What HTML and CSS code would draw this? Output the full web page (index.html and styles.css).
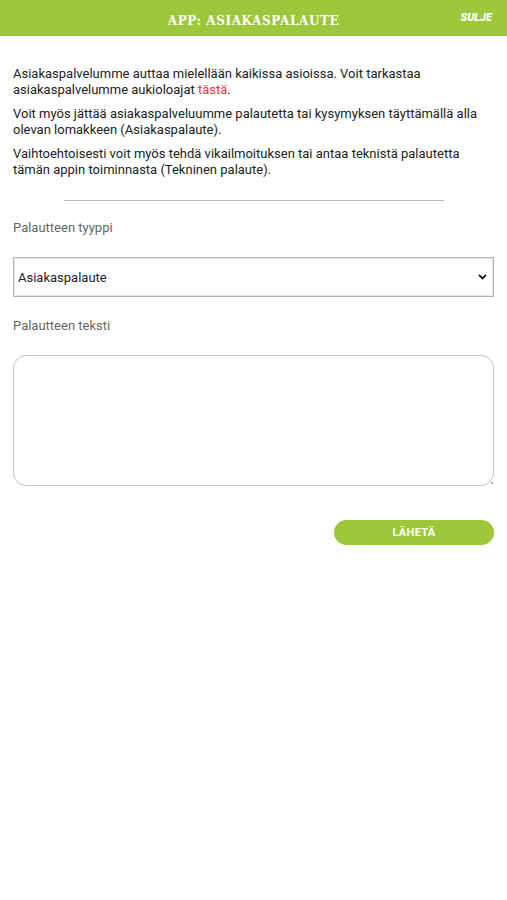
FILE: index.html
```html
<!DOCTYPE html>
<html lang="fi">
<head>
<meta charset="utf-8">
<title>APP: ASIAKASPALAUTE</title>
<link rel="stylesheet" href="styles.css">
</head>
<body>
<header class="topbar">
  <h1 class="title">APP: ASIAKASPALAUTE</h1>
  <a class="close" href="#">SULJE</a>
</header>
<main class="content">
  <p>Asiakaspalvelumme auttaa mielellään kaikissa asioissa. Voit tarkastaa asiakaspalvelumme aukioloajat <a class="link" href="#">tästä</a>.</p>
  <p>Voit myös jättää asiakaspalveluumme palautetta tai kysymyksen täyttämällä alla olevan lomakkeen (Asiakaspalaute).</p>
  <p>Vaihtoehtoisesti voit myös tehdä vikailmoituksen tai antaa teknistä palautetta tämän appin toiminnasta (Tekninen palaute).</p>
  <hr class="divider">
  <form class="form">
    <label class="label" for="text">Palautteen tyyppi</label>
    <div class="select">
      <span>Asiakaspalaute</span>
      <svg class="chev" width="9" height="6" viewBox="0 0 9 6"><path d="M1 1 L4.5 4.5 L8 1" fill="none" stroke="#222" stroke-width="1.8"/></svg>
    </div>
    <label class="label" for="text">Palautteen teksti</label>
    <div class="textwrap">
      <textarea id="text" class="textarea"></textarea>
      <span class="grip"></span>
    </div>
    <div class="actions">
      <button type="button" class="send">LÄHETÄ</button>
    </div>
  </form>
</main>
</body>
</html>
```
FILE: styles.css
```css
* { box-sizing: border-box; }
html, body { margin: 0; padding: 0; background: #fff; }
body { font-family: Roboto, "Noto Sans", sans-serif; color: #222; }
.topbar {
  height: 36px;
  background: #9dc83b;
  display: flex;
  align-items: center;
  justify-content: center;
  position: relative;
}
.title {
  margin: 0;
  font-family: "DejaVu Serif", serif;
  font-weight: bold;
  font-size: 12px;
  color: #fff;
  letter-spacing: 0.6px;
  padding-top: 6px;
}
.close {
  position: absolute;
  right: 15px;
  top: 11px;
  font-family: Roboto, sans-serif;
  font-weight: 900;
  font-style: italic;
  font-size: 11px;
  color: #fff;
  text-decoration: none;
}
.content { padding: 30px 13px 0 13px; }
.content p {
  margin: 0 0 8px 0;
  font-size: 13px;
  line-height: 16px;
  color: #222;
}
.link { color: #e53935; text-decoration: none; }
.divider {
  border: 0;
  border-top: 1px solid #bbb;
  margin: 22px 50px 0 51px;
}
.form { display: flex; flex-direction: column; }
.label {
  font-size: 13px;
  color: #666;
  margin-top: 19px;
  line-height: 16px;
}
.select {
  margin-top: 21px;
  height: 40px;
  border: 1px solid #b5b5b5;
  display: flex;
  align-items: center;
  justify-content: space-between;
  padding: 0 6px 0 4px;
  font-size: 13px;
  color: #222;
  box-shadow: inset 0 0 0 1px #e6e6e6;
}
.chev { display: block; }
.select + .label { margin-top: 21px; }
.textwrap { position: relative; margin-top: 21px; display: flex; }
.textarea {
  flex: 1;
  height: 131px;
  border: 1px solid #c4c4c4;
  border-radius: 13px;
  resize: none;
  font-family: inherit;
}
.grip {
  position: absolute;
  right: 1px;
  bottom: 2px;
  width: 2px;
  height: 2px;
  background: #999;
  border-radius: 1px;
}
.actions { display: flex; justify-content: flex-end; margin-top: 34px; }
.send {
  width: 160px;
  height: 25px;
  border: 0;
  border-radius: 13px;
  background: #9dc83b;
  color: #fff;
  font-family: Roboto, sans-serif;
  font-weight: bold;
  font-size: 11px;
  letter-spacing: 0.3px;
}
```
